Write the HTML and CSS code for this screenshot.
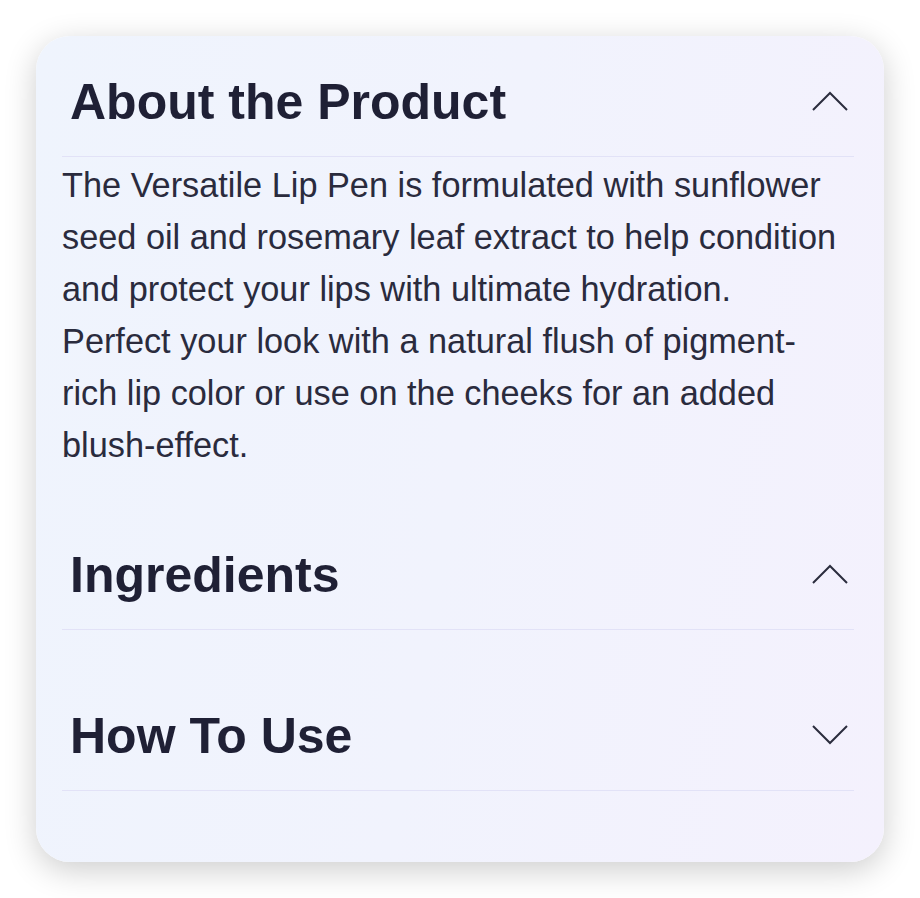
FILE: index.html
```html
<!DOCTYPE html>
<html lang="en">
<head>
<meta charset="utf-8">
<title>Product details</title>
<link rel="stylesheet" href="styles.css">
</head>
<body>
<div class="card">
  <section class="section">
    <div class="header">
      <h2 class="title">About the Product</h2>
      <svg class="chev" width="36" height="20" viewBox="0 0 36 20"><polyline points="1,19 18,2 35,19" /></svg>
    </div>
    <div class="body">
      <p class="text">The Versatile Lip Pen is formulated with sunflower seed oil and rosemary leaf extract to help condition and protect your lips with ultimate hydration. Perfect your look with a natural flush of pigment-rich lip color or use on the cheeks for an added blush-effect.</p>
    </div>
  </section>
  <section class="section">
    <div class="header">
      <h2 class="title">Ingredients</h2>
      <svg class="chev" width="36" height="20" viewBox="0 0 36 20"><polyline points="1,19 18,2 35,19" /></svg>
    </div>
    <div class="body"></div>
  </section>
  <section class="section">
    <div class="header">
      <h2 class="title">How To Use</h2>
      <svg class="chev" width="36" height="20" viewBox="0 0 36 20"><polyline points="1,1 18,18 35,1" /></svg>
    </div>
  </section>
</div>
</body>
</html>
```

FILE: styles.css
```css
html, body {
  margin: 0;
  padding: 0;
  background: #ffffff;
}
body {
  padding: 36px;
  font-family: "Liberation Sans", Arial, sans-serif;
}
.card {
  width: 848px;
  box-sizing: border-box;
  padding: 0 30px 71px 26px;
  border-radius: 34px;
  background: linear-gradient(100deg, #eff4fd 0%, #f1f3fd 50%, #f4f1fd 100%);
  box-shadow: 0 8px 32px rgba(0, 0, 0, 0.2);
}
.header {
  display: flex;
  align-items: center;
  justify-content: space-between;
  padding: 36px 6px 24px 8px;
  height: 60px;
  border-bottom: 1px solid #e2e2f7;
}
.title {
  margin: 0;
  font-size: 50px;
  line-height: 60px;
  font-weight: 700;
  color: #1f2035;
}
.chev {
  display: block;
  margin-top: -3px;
}
.chev polyline {
  fill: none;
  stroke: #2b2d3e;
  stroke-width: 2;
}
.body {
  padding: 0 0 40px 0;
}
.text {
  margin: 0;
  padding-top: 2px;
  margin-bottom: -2px;
  max-width: 778px;
  font-size: 34.3px;
  line-height: 52px;
  color: #2a2b3d;
}
```
